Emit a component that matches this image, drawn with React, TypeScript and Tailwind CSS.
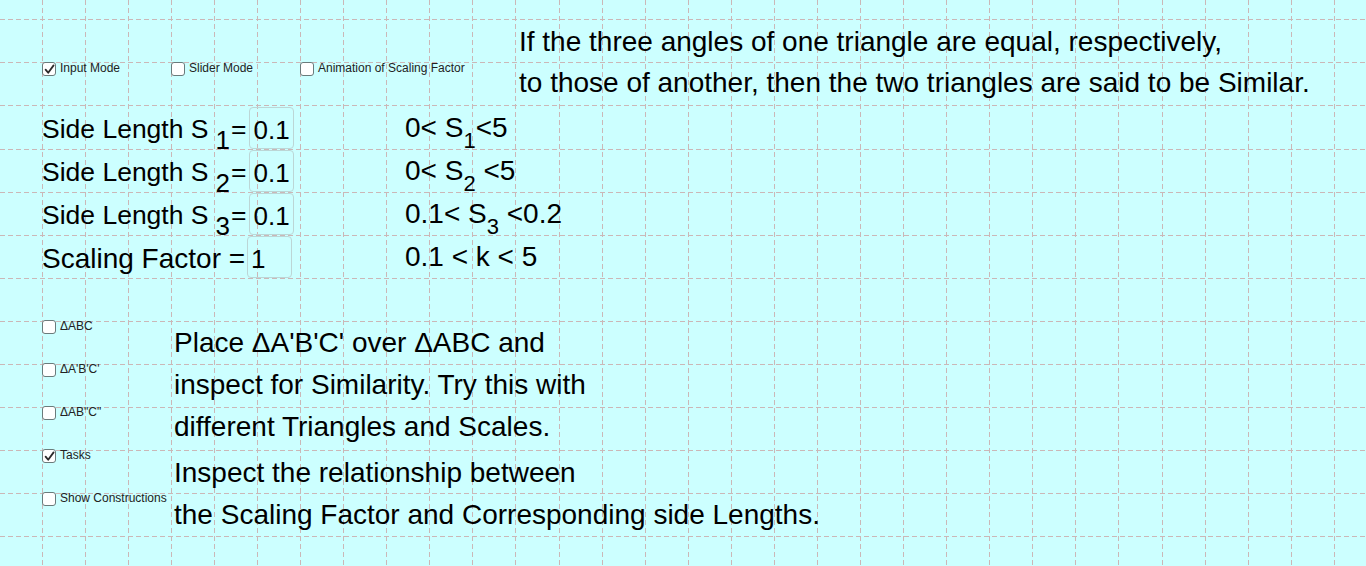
import React from "react";

const GRID = 43.07;
const X0 = 41.7;
const Y0 = 19.3;

function Grid() {
  const vs: number[] = [];
  for (let k = 0; k < 32; k++) vs.push(Math.round(X0 + GRID * k) + 0.5);
  const hs: number[] = [];
  for (let k = 0; k < 13; k++) hs.push(Math.round(Y0 + GRID * k) + 0.5);
  return (
    <svg className="absolute inset-0 pointer-events-none" width={1366} height={566}>
      {vs.map((x) => (
        <line key={"v" + x} x1={x} y1={0} x2={x} y2={566} stroke="#cbb7b7" strokeWidth={1} strokeDasharray="5 3" />
      ))}
      {hs.map((y) => (
        <line key={"h" + y} x1={0} y1={y} x2={1366} y2={y} stroke="#cbb7b7" strokeWidth={1} strokeDasharray="5 3" />
      ))}
    </svg>
  );
}

function Check({ checked, label }: { checked?: boolean; label: string }) {
  return (
    <div className="flex items-start gap-[4px] whitespace-nowrap">
      <div className="w-[14px] h-[14px] shrink-0 rounded-[3px] border-[1.5px] border-[#6a7b7b] bg-white flex items-center justify-center">
        {checked && (
          <svg width="11" height="11" viewBox="0 0 11 11">
            <path d="M1.6 5.6 L4.2 8.8 L9.6 1.4" fill="none" stroke="#2b2b2b" strokeWidth="1.8" strokeLinecap="round" strokeLinejoin="round" />
          </svg>
        )}
      </div>
      <span className="text-[12px] leading-[14px] text-[#222] -mt-[1px]">{label}</span>
    </div>
  );
}

function Sub({ children, big }: { children: React.ReactNode; big?: boolean }) {
  return (
    <span
      className={
        big
          ? "relative top-[11px] text-[26px] leading-none ml-[7px] mr-[1px]"
          : "relative top-[11px] text-[22px] leading-none"
      }
    >
      {children}
    </span>
  );
}

function Box({ value }: { value: string }) {
  return (
    <div className="h-[42px] w-[45px] rounded-[4px] border border-[#bcd6d6] flex items-center pl-[3px] pt-[5px] text-[26px]">
      {value}
    </div>
  );
}

function Row({ label, value, range, gap }: { label: React.ReactNode; value: string; range: React.ReactNode; gap: string }) {
  return (
    <div className="h-[43px] flex items-center">
      <div className="w-[363px] flex items-center">
        <span className="whitespace-nowrap mt-[4px]">{label}</span>
        <div className={gap}>
          <Box value={value} />
        </div>
      </div>
      <span className="whitespace-nowrap text-[28px]">{range}</span>
    </div>
  );
}

export default function App() {
  return (
    <div className="relative w-[1366px] h-[566px] overflow-hidden bg-[#ccffff] text-black font-['Liberation_Sans',Arial,sans-serif]">
      <Grid />
      <div className="relative">
        {/* Top section */}
        <div className="h-[106px] flex">
          <div className="w-[519px] shrink-0 pl-[42px] pt-[62px] flex">
            <div className="w-[129px]">
              <Check checked label="Input Mode" />
            </div>
            <div className="w-[129px]">
              <Check label="Slider Mode" />
            </div>
            <div>
              <Check label="Animation of Scaling Factor" />
            </div>
          </div>
          <div className="pt-[21px] text-[28px] leading-[41px] whitespace-nowrap">
            <div>If the three angles of one triangle are equal, respectively,</div>
            <div>to those of another, then the two triangles are said to be Similar.</div>
          </div>
        </div>

        {/* Inputs */}
        <div className="pl-[42px]">
          <Row
            gap="ml-[3px]"
            label={<span className="text-[26.5px]">Side Length S<Sub big>1</Sub>=</span>}
            value="0.1"
            range={<>0&lt; S<Sub>1</Sub>&lt;5</>}
          />
          <Row
            gap="ml-[3px]"
            label={<span className="text-[26.5px]">Side Length S<Sub big>2</Sub>=</span>}
            value="0.1"
            range={<>0&lt; S<Sub>2</Sub> &lt;5</>}
          />
          <Row
            gap="ml-[3px]"
            label={<span className="text-[26.5px]">Side Length S<Sub big>3</Sub>=</span>}
            value="0.1"
            range={<>0.1&lt; S<Sub>3</Sub> &lt;0.2</>}
          />
          <Row
            gap="ml-[2px]"
            label={<span className="text-[28px]">Scaling Factor =</span>}
            value="1"
            range={<>0.1 &lt; k &lt; 5</>}
          />
        </div>

        {/* Bottom section */}
        <div className="flex">
          <div className="w-[174px] shrink-0 pl-[42px] pt-[42px] flex flex-col">
            <div className="h-[43px]"><Check label="ΔABC" /></div>
            <div className="h-[43px]"><Check label="ΔA'B'C'" /></div>
            <div className="h-[43px]"><Check label={'ΔAB"C"'} /></div>
            <div className="h-[43px]"><Check checked label="Tasks" /></div>
            <div className="h-[43px]"><Check label="Show Constructions" /></div>
          </div>
          <div className="pt-[44px] text-[28px] leading-[42px] whitespace-nowrap">
            <div>Place ΔA'B'C' over ΔABC and</div>
            <div>inspect for Similarity. Try this with</div>
            <div>different Triangles and Scales.</div>
            <div className="mt-[4px]">Inspect the relationship between</div>
            <div>the Scaling Factor and Corresponding side Lengths.</div>
          </div>
        </div>
      </div>
    </div>
  );
}
